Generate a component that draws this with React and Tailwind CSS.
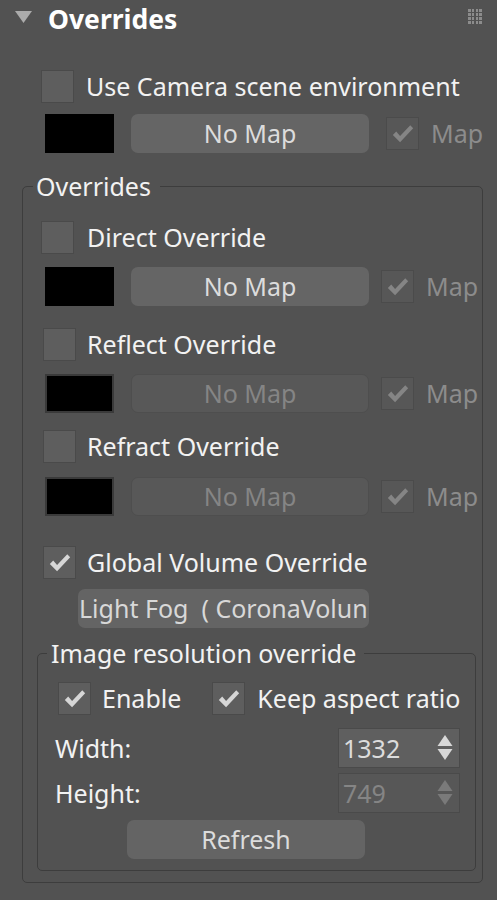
import React from 'react';

const font = { fontFamily: '"Noto Sans", "Open Sans", sans-serif' };

function Tick({ color = '#d6d6d6' }) {
  return (
    <svg viewBox="0 0 32 32" className="w-full h-full" aria-hidden="true">
      <path d="M6 17.5 L9.5 14 L13.5 18.5 L24 7.5 L27 10.5 L13.5 25 Z" fill={color} />
    </svg>
  );
}

function Check({ checked = false, dim = false, className = '' }) {
  return (
    <div
      className={`w-[33px] h-[33px] shrink-0 border ${
        dim ? 'bg-[#575757] border-[#4b4b4b]' : 'bg-[#5e5e5e] border-[#4a4a4a]'
      } ${className}`}
    >
      {checked && <Tick color={dim ? '#858585' : '#d6d6d6'} />}
    </div>
  );
}

function MapRow({ disabled = false, swatchMl = 'ml-[22px]', checkGap = 'ml-[12px]' }) {
  return (
    <div className="flex items-start h-[39px]">
      <div
        className={`${swatchMl} w-[69px] h-[39px] shrink-0 bg-black ${
          disabled ? 'border-2 border-[#3a3a3a]' : ''
        }`}
      />
      <div
        className={`ml-[17px] w-[238px] h-[39px] shrink-0 rounded-[7px] flex items-center justify-center ${
          disabled
            ? 'bg-[#585858] border border-[#4e4e4e] text-[#858585]'
            : 'bg-[#656565] text-[#dcdcdc]'
        }`}
      >
        No Map
      </div>
      <Check checked dim className={`${checkGap} mt-[3px]`} />
      <span className="ml-[12px] leading-[39px] text-[#8c8c8c]">Map</span>
    </div>
  );
}

function Spinner({ value, disabled = false }) {
  const arrow = disabled ? '#7a7a7a' : '#d8d8d8';
  return (
    <div
      className={`w-[122px] h-[40px] border border-[#4a4a4a] flex items-center justify-between pl-[4px] pr-[6px] ${
        disabled ? 'bg-[#575757] text-[#858585]' : 'bg-[#5f5f5f] text-[#dcdcdc]'
      }`}
    >
      <span>{value}</span>
      <svg width="16" height="26" viewBox="0 0 16 26" aria-hidden="true">
        <polygon points="8,0 15.5,11 0.5,11" fill={arrow} />
        <polygon points="0.5,14 15.5,14 8,25" fill={arrow} />
      </svg>
    </div>
  );
}

function Grip() {
  const dots = Array.from({ length: 16 });
  return (
    <div className="grid grid-cols-4 gap-[1.3px] w-[14px]">
      {dots.map((_, i) => (
        <span key={i} className="w-[2.6px] h-[2.6px] bg-[#8c8c8c]" />
      ))}
    </div>
  );
}

export default function App() {
  return (
    <div className="w-[497px] min-h-[900px] bg-[#525252] text-[#f2f2f2] text-[25px] leading-[33px] overflow-hidden" style={font}>
      {/* rollout header */}
      <div className="h-[38px] flex items-center">
        <svg width="17" height="13" viewBox="0 0 17 13" className="ml-[15px] mt-[-4px]" aria-hidden="true">
          <polygon points="0,0 17,0 8.5,12" fill="#ababab" />
        </svg>
        <span className="ml-[16px] font-bold text-[26.5px] text-white">Overrides</span>
        <div className="ml-auto mr-[15px] mt-[-5px]">
          <Grip />
        </div>
      </div>

      <div className="mt-[32px] flex items-center h-[33px]">
        <Check className="ml-[41px]" />
        <span className="ml-[12px]">Use Camera scene environment</span>
      </div>
      <div className="mt-[11px]">
        <MapRow swatchMl="ml-[45px]" checkGap="ml-[17px]" />
      </div>

      <fieldset className="mt-[18px] ml-[22px] w-[461px] border border-[#3d3d3d] rounded-[5px] pb-[11px]">
        <legend className="ml-[10px] pl-[3px] pr-[9px] leading-[30px]">Overrides</legend>

        <div className="mt-[20px] flex items-center h-[33px]">
          <Check className="ml-[18px]" />
          <span className="ml-[13px]">Direct Override</span>
        </div>
        <div className="mt-[13px]">
          <MapRow />
        </div>

        <div className="mt-[22px] flex items-center h-[33px]">
          <Check className="ml-[20px]" />
          <span className="ml-[11px]">Reflect Override</span>
        </div>
        <div className="mt-[13px]">
          <MapRow disabled />
        </div>

        <div className="mt-[17px] flex items-center h-[33px]">
          <Check className="ml-[20px]" />
          <span className="ml-[11px]">Refract Override</span>
        </div>
        <div className="mt-[14px]">
          <MapRow disabled />
        </div>

        <div className="mt-[30px] flex items-center h-[33px]">
          <Check checked className="ml-[20px]" />
          <span className="ml-[11px]">Global Volume Override</span>
        </div>
        <div className="mt-[10px] ml-[55px] w-[291px] h-[39px] rounded-[7px] bg-[#646464] text-[#d8d8d8] leading-[39px] pl-[1px] overflow-hidden whitespace-nowrap">
          Light Fog&nbsp; ( CoronaVolun
        </div>

        <fieldset className="mt-[10px] ml-[14px] w-[439px] border border-[#3d3d3d] rounded-[5px] pb-[11px]">
          <legend className="ml-[9px] pl-[4px] pr-[8px] leading-[30px]">Image resolution override</legend>

          <div className="mt-[14px] flex items-center h-[33px]">
            <Check checked className="ml-[20px]" />
            <span className="ml-[11px]">Enable</span>
            <Check checked className="ml-[31px]" />
            <span className="ml-[12px] whitespace-nowrap">Keep aspect ratio</span>
          </div>

          <div className="mt-[13px] flex items-center justify-between h-[40px] pl-[17px] pr-[15px]">
            <span>Width:</span>
            <Spinner value="1332" />
          </div>
          <div className="mt-[5px] flex items-center justify-between h-[40px] pl-[17px] pr-[15px]">
            <span>Height:</span>
            <Spinner value="749" disabled />
          </div>

          <div className="mt-[7px] ml-[89px] w-[238px] h-[39px] rounded-[7px] bg-[#646464] text-[#dcdcdc] leading-[39px] text-center">
            Refresh
          </div>
        </fieldset>
      </fieldset>
    </div>
  );
}
